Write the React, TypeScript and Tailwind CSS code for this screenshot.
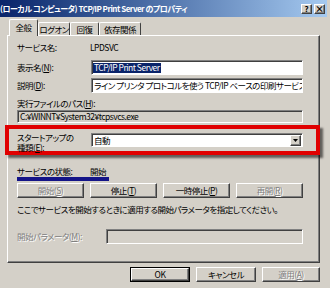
import React from "react";

const F = "font-['Noto_Sans_CJK_JP',sans-serif] [font-feature-settings:'palt']";
const RAISED =
  "border border-t-white border-l-white border-b-[#404040] border-r-[#404040] shadow-[inset_-1px_-1px_0_#808080]";
const SUNKEN =
  "border border-t-[#808080] border-l-[#808080] border-b-white border-r-white shadow-[inset_1px_1px_0_#404040]";
const DIS = "text-[#808080] [text-shadow:1px_1px_0_#ffffff]";
const TAB =
  "h-[13px] border-t border-l border-t-white border-l-white border-r border-r-[#404040] rounded-t-[2px] flex items-center justify-center whitespace-nowrap";

function Btn({
  children,
  disabled,
  className,
}: {
  children: React.ReactNode;
  disabled?: boolean;
  className?: string;
}) {
  return (
    <div
      className={
        RAISED +
        " bg-[#d4d0c8] flex items-center justify-center whitespace-nowrap " +
        (disabled ? DIS + " " : "text-black ") +
        (className ?? "")
      }
    >
      {children}
    </div>
  );
}

export default function App() {
  return (
    <div
      className={
        "w-[330px] h-[288px] bg-[#d4d0c8] overflow-hidden flex flex-col text-black text-[8.5px] leading-none tracking-[-0.5px] " +
        F
      }
    >
      {/* title bar */}
      <div className="h-[17px] mr-[3px] flex items-center bg-linear-to-r from-[#0a246a] to-[#a6caf0] pr-[2px]">
        <span className="flex-1 text-white font-bold text-[8px] whitespace-nowrap">
          (ローカル コンピュータ) TCP/IP Print Server のプロパティ
        </span>
        <div className="flex gap-[2px] tracking-normal">
          <div className={RAISED + " bg-[#d4d0c8] w-[11px] h-[10px] flex items-center justify-center text-[8px] font-bold text-black"}>
            ?
          </div>
          <div className={RAISED + " bg-[#d4d0c8] w-[11px] h-[10px] flex items-center justify-center text-[9px] font-bold text-black"}>
            ×
          </div>
        </div>
      </div>

      <div className="pl-[7px] pr-[7px] border-r-[3px] border-r-[#d4d0c8]">
        {/* tabs */}
        <div className="flex items-end h-[16px] mt-[2px] pl-[2px] relative z-10">
          <div className="h-[17px] mb-[-1px] w-[29px] bg-[#d4d0c8] border-t border-l border-t-white border-l-white border-r border-r-[#404040] rounded-t-[2px] flex items-center justify-center pb-[1px]">
            全般
          </div>
          <div className={TAB + " w-[32px]"}>ログオン</div>
          <div className={TAB + " w-[29px]"}>回復</div>
          <div className={TAB + " w-[42px]"}>依存関係</div>
        </div>

        {/* panel */}
        <div className="h-[228px] border border-t-white border-l-white border-b-[#404040] border-r-[#404040] shadow-[inset_-1px_-1px_0_#808080] pl-[9px] pr-[16px] pt-[4px] flex flex-col">
          <div className="h-[14px] flex items-center">
            <span className="w-[73px]">サービス名:</span>
            <span>LPDSVC</span>
          </div>

          <div className="h-[15px] mt-[6px] flex items-center">
            <span className="w-[74px]">
              表示名(<span className="underline">N</span>):
            </span>
            <div className={SUNKEN + " flex-1 h-[15px] bg-white flex items-center pl-[1px]"}>
              <span className="bg-[#0a246a] text-white px-[1px] h-[10px] flex items-center whitespace-nowrap">
                TCP/IP Print Server
              </span>
            </div>
          </div>

          <div className="h-[15px] mt-[3px] flex items-center">
            <span className="w-[74px]">
              説明(<span className="underline">D</span>):
            </span>
            <div className={SUNKEN + " flex-1 h-[15px] bg-white flex items-center pl-[2px] overflow-hidden whitespace-nowrap"}>
              ライン プリンタ プロトコルを使う TCP/IP ベースの印刷サービスを提供します。
            </div>
          </div>

          <div className="h-[12px] mt-[4px] flex items-center">
            実行ファイルのパス(<span className="underline">H</span>):
          </div>
          <div className={SUNKEN + " h-[13px] mt-[1px] bg-[#d4d0c8] flex items-center pl-[2px] whitespace-nowrap"}>
            C:¥WINNT¥System32¥tcpsvcs.exe
          </div>

          {/* highlighted startup type */}
          <div className="mt-[2px] ml-[-12px] mr-[-17px] h-[30px] border-4 border-[#e00000] shadow-[3px_3px_2px_rgba(0,0,0,0.55)] pl-[8px] pr-[13px] pt-[4px] flex items-start relative z-10">
            <div className="w-[74px] leading-[10px] mt-[-1px]">
              スタートアップの
              <br />
              種類(<span className="underline">E</span>):
            </div>
            <div className={SUNKEN + " flex-1 h-[14px] bg-white flex items-center pl-[2px] pr-[1px]"}>
              <span className="flex-1">自動</span>
              <div className={RAISED + " bg-[#d4d0c8] w-[11px] h-[11px] flex items-center justify-center"}>
                <svg width="5" height="3" viewBox="0 0 5 3">
                  <path d="M0 0H5L2.5 3Z" fill="#000" />
                </svg>
              </div>
            </div>
          </div>

          <div className="h-[12px] mt-[10px] flex items-center">
            <span className="w-[73px]">サービスの状態:</span>
            <span>開始</span>
          </div>
          <div className="h-[4px] w-[92px] bg-[#141488]" />

          <div className="mt-[2px] h-[15px] flex gap-[6px]">
            <Btn disabled className="w-[68px]">
              開始(<span className="underline">S</span>)
            </Btn>
            <Btn className="w-[68px]">
              停止(<span className="underline">T</span>)
            </Btn>
            <Btn className="w-[68px]">
              一時停止(<span className="underline">P</span>)
            </Btn>
            <Btn disabled className="w-[68px]">
              再開(<span className="underline">R</span>)
            </Btn>
          </div>

          <div className="h-[12px] mt-[5px] flex items-center whitespace-nowrap">
            ここでサービスを開始するときに適用する開始パラメータを指定してください。
          </div>

          <div className="h-[15px] mt-[14px] flex items-center">
            <span className={"w-[89px] " + DIS}>
              開始パラメータ(<span className="underline">M</span>):
            </span>
            <div className={SUNKEN + " flex-1 h-[15px] bg-[#d4d0c8]"} />
          </div>
        </div>

        {/* bottom buttons */}
        <div className="mt-[4px] h-[15px] flex justify-end gap-[6px]">
          <div className="border border-black h-[15px] w-[60px] flex">
            <Btn className="flex-1">OK</Btn>
          </div>
          <Btn className="w-[60px]">キャンセル</Btn>
          <Btn disabled className="w-[58px]">
            適用(<span className="underline">A</span>)
          </Btn>
        </div>
      </div>
    </div>
  );
}
